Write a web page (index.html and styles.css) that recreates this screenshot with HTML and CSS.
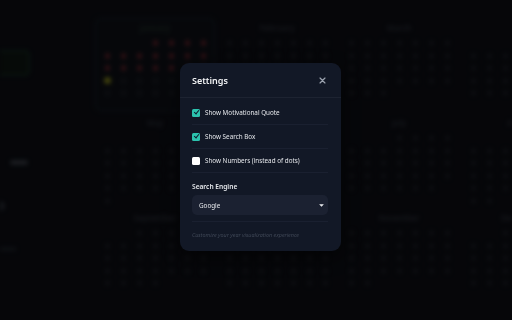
FILE: index.html
```html
<!DOCTYPE html>
<html lang="en">
<head>
    <meta charset="UTF-8">
    <meta name="viewport" content="width=device-width, initial-scale=1.0">
    <title>Year Dots</title>
    <link rel="stylesheet" href="styles.css">
</head>
<body>
    <!-- Painel de fundo (desfocado atrás do modal) -->
    <div class="dashboard">
        <aside class="sidebar">
            <div class="side-badge"></div>
            <div class="side-label"></div>
            <div class="side-dot"></div>
            <div class="side-text"></div>
        </aside>
        <main class="months" id="months"></main>
    </div>

    <div class="overlay">
        <div class="modal">
            <div class="modal-header">
                <h2 class="modal-title">Settings</h2>
                <button class="close-btn" aria-label="Close">
                    <svg width="7" height="7" viewBox="0 0 10 10">
                        <path d="M1.5 1.5 L8.5 8.5 M8.5 1.5 L1.5 8.5" stroke="#9ca3af" stroke-width="1.8" stroke-linecap="round"/>
                    </svg>
                </button>
            </div>

            <div class="modal-body">
                <label class="option">
                    <span class="check checked"></span>
                    <span class="option-text">Show Motivational Quote</span>
                </label>
                <label class="option">
                    <span class="check checked"></span>
                    <span class="option-text">Show Search Box</span>
                </label>
                <label class="option">
                    <span class="check"></span>
                    <span class="option-text">Show Numbers (instead of dots)</span>
                </label>

                <div class="field">
                    <div class="field-label">Search Engine</div>
                    <div class="select">
                        <span>Google</span>
                        <svg width="5" height="3" viewBox="0 0 6 4">
                            <path d="M0.6 0.6 L3 3.2 L5.4 0.6 Z" fill="#e5e7eb" stroke="#e5e7eb" stroke-width="0.8" stroke-linejoin="round"/>
                        </svg>
                    </div>
                </div>

                <p class="modal-footer">Customize your year visualization experience</p>
            </div>
        </div>
    </div>

<script>
    // Monta os cartões dos meses com os pontos de cada dia
    const months = ["January", "February", "March", "April", "May", "June",
                    "July", "August", "September", "October", "November", "December"];
    const offsets = [3, 0, 0, 3, 5, 1, 3, 6, 2, 4, 0, 2];
    const lengths = [31, 28, 31, 30, 31, 30, 31, 31, 30, 31, 30, 31];
    const today = 19;

    const grid = document.getElementById("months");

    months.forEach((name, m) => {
        const card = document.createElement("div");
        card.classList.add("month");
        if (m === 0) card.classList.add("current");

        const label = document.createElement("div");
        label.classList.add("month-name");
        label.textContent = name;
        card.appendChild(label);

        const dots = document.createElement("div");
        dots.classList.add("dots");

        for (let i = 0; i < offsets[m]; i++) {
            const empty = document.createElement("span");
            empty.classList.add("dot", "empty");
            dots.appendChild(empty);
        }

        for (let d = 1; d <= lengths[m]; d++) {
            const dot = document.createElement("span");
            dot.classList.add("dot");
            if (m === 0 && d < today) dot.classList.add("past");
            if (m === 0 && d === today) dot.classList.add("today");
            dots.appendChild(dot);
        }

        card.appendChild(dots);
        grid.appendChild(card);
    });
</script>
</body>
</html>
```

FILE: styles.css
```css
/* Estilos gerais */
body {
    font-family: 'Noto Sans', 'Segoe UI', sans-serif;
    background-color: #0a0b10;
    margin: 0;
    padding: 0;
    width: 512px;
    height: 320px;
    overflow: hidden;
}

/* Painel de fundo */
.dashboard {
    display: flex;
    width: 512px;
    height: 320px;
    overflow: hidden;
    filter: blur(2.2px);
}

.sidebar {
    width: 94px;
    flex-shrink: 0;
    display: flex;
    flex-direction: column;
    padding-top: 50px;
    box-sizing: border-box;
}

.side-badge {
    width: 28px;
    height: 22px;
    border: 2px solid #11241b;
    border-left: none;
    border-radius: 0 5px 5px 0;
    background-color: #0b110e;
}

.side-label {
    width: 18px;
    height: 5px;
    margin: 84px 0 0 10px;
    background-color: #2c2f36;
    border-radius: 3px;
}

.side-dot {
    width: 5px;
    height: 10px;
    margin-top: 36px;
    background-color: #22252c;
    border-radius: 0 5px 5px 0;
}

.side-text {
    width: 16px;
    height: 4px;
    margin-top: 36px;
    background-color: #171a20;
}

.months {
    display: grid;
    grid-template-columns: repeat(4, 122px);
    grid-auto-rows: 95px;
    padding-top: 17px;
}

.month {
    display: flex;
    flex-direction: column;
    align-items: center;
    padding-top: 6px;
    box-sizing: border-box;
    border-radius: 8px;
}

.month.current {
    border: 2px solid #10141a;
    background-color: #0b0d12;
    padding-top: 4px;
}

.month-name {
    font-size: 8px;
    font-weight: 600;
    color: #24272e;
    height: 14px;
    line-height: 10px;
}

.month.current .month-name {
    color: #1d2a24;
}

.dots {
    display: grid;
    grid-template-columns: repeat(7, 16px);
    grid-auto-rows: 12.5px;
    justify-items: center;
    align-items: center;
}

.dot {
    width: 5px;
    height: 6px;
    border-radius: 50%;
    background-color: #15171c;
}

.dot.empty {
    background-color: transparent;
}

.dot.past {
    background-color: #4e1a20;
}

.dot.today {
    background-color: #6b6c16;
    width: 7px;
    height: 7px;
}

/* Camada escura e modal */
.overlay {
    position: fixed;
    inset: 0;
    background-color: rgba(0, 0, 0, 0.4);
    display: flex;
    align-items: flex-start;
    justify-content: flex-start;
    padding: 63px 0 0 180px;
    box-sizing: border-box;
}

.modal {
    width: 161px;
    background-color: #121826;
    border-radius: 9px;
    box-shadow: 0 6px 20px rgba(0, 0, 0, 0.5);
    color: #e5e7eb;
}

.modal-header {
    display: flex;
    justify-content: space-between;
    align-items: center;
    height: 34px;
    padding: 0 15px 0 12px;
    border-bottom: 1px solid #1d2331;
}

.modal-title {
    margin: 0;
    font-size: 9px;
    font-weight: 600;
    color: #f3f4f6;
}

.close-btn {
    background: none;
    border: none;
    padding: 0;
    width: 8px;
    height: 8px;
    display: flex;
    align-items: center;
    justify-content: center;
}

.modal-body {
    padding: 3px 13px 0 12px;
}

.option {
    display: flex;
    align-items: center;
    gap: 5px;
    height: 23px;
    border-bottom: 1px solid #1a2030;
}

.check {
    width: 8px;
    height: 8px;
    border-radius: 1.5px;
    background-color: #ffffff;
    flex-shrink: 0;
    position: relative;
}

.check.checked {
    background-color: #2cc3ae;
}

.check.checked::after {
    content: "";
    position: absolute;
    left: 2.6px;
    top: 0.8px;
    width: 2px;
    height: 4.2px;
    border: solid #0f172a;
    border-width: 0 1.2px 1.2px 0;
    transform: rotate(40deg);
}

.option-text {
    font-size: 6.3px;
    color: #e5e7eb;
}

.field {
    padding: 9px 0 6px;
    border-bottom: 1px solid #1a2030;
}

.field-label {
    font-size: 6.6px;
    font-weight: 600;
    color: #e5e7eb;
    margin-bottom: 4px;
}

.select {
    height: 20px;
    background-color: #1b2131;
    border-radius: 5px;
    display: flex;
    justify-content: space-between;
    align-items: center;
    padding: 0 4px 0 7px;
    font-size: 6.3px;
    color: #e5e7eb;
}

.modal-footer {
    margin: 0;
    padding: 9px 0 12px;
    font-size: 5.4px;
    font-style: italic;
    color: #3f4756;
}
```
